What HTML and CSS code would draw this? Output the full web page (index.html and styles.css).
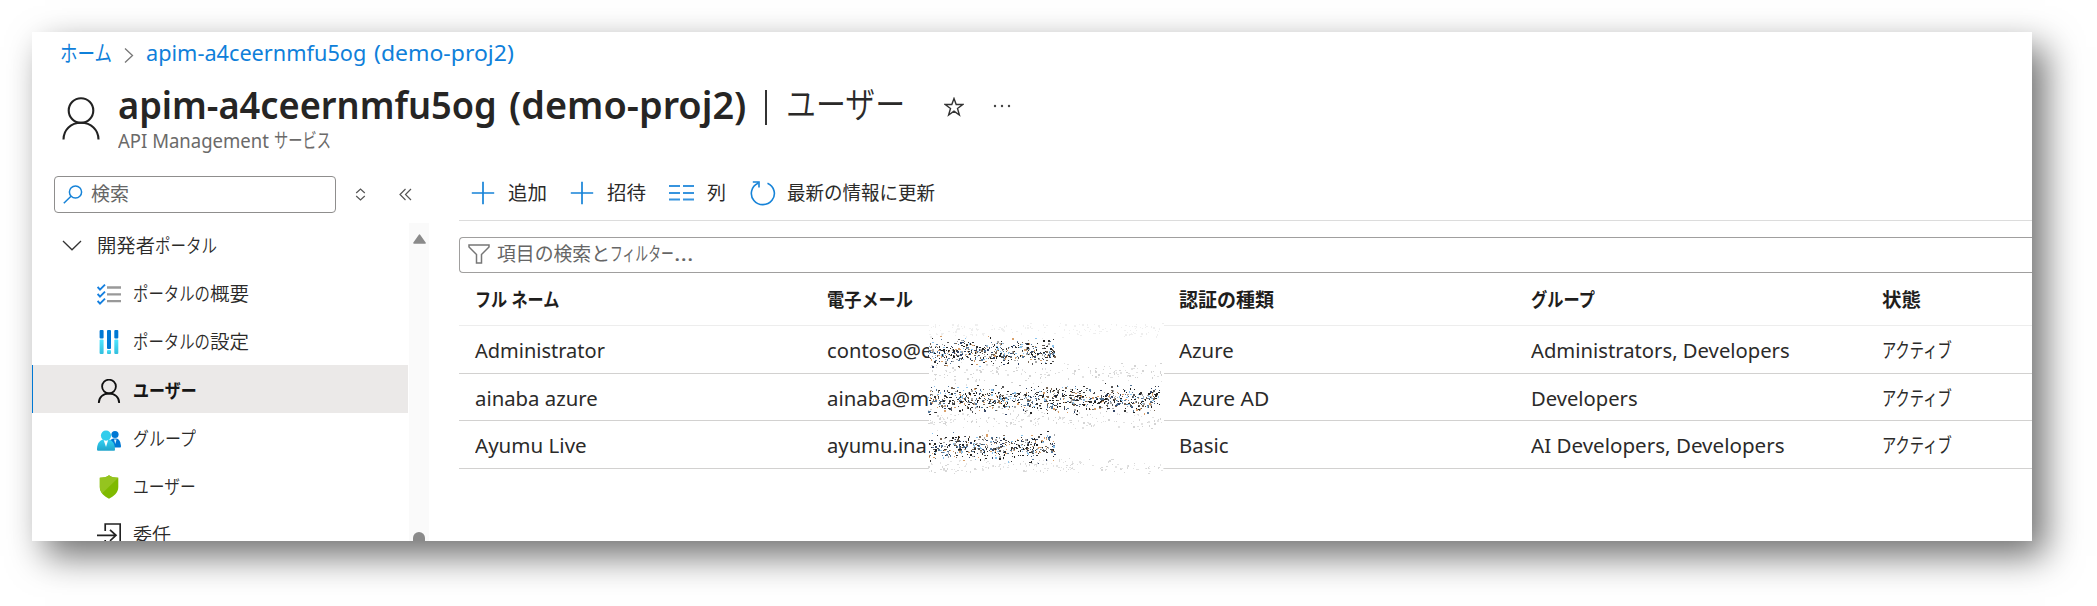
FILE: index.html
```html
<!DOCTYPE html>
<html lang="ja">
<head>
<meta charset="utf-8">
<title>apim-a4ceernmfu5og (demo-proj2) | ユーザー</title>
<link rel="stylesheet" href="styles.css">
</head>
<body>
<svg class="defs" width="0" height="0" aria-hidden="true">
  <defs>
    <linearGradient id="cyan" x1="0" y1="0" x2="0" y2="1"><stop offset="0" stop-color="#32d4f5"/><stop offset="1" stop-color="#22a5cb"/></linearGradient>
    <linearGradient id="aqua" x1="0" y1="0" x2="0" y2="1"><stop offset="0" stop-color="#50e6ff"/><stop offset="1" stop-color="#32bedd"/></linearGradient>
  </defs>
</svg>
<main class="window">
  <nav class="breadcrumb">
    <a class="crumb"><span data-fit="52">ホーム</span></a>
    <svg class="crumb-sep" width="10" height="17" viewBox="0 0 10 17"><path d="M1 1.500 8.500 8.500 1 15.500" fill="none" stroke="#777" stroke-width="1.300"/></svg>
    <a class="crumb"><span data-fit="220">apim-a4ceernmfu5og</span><span class="crumb-group" data-fit="140">(demo-proj2)</span></a>
  </nav>
  <header class="title-area">
    <svg class="title-icon" width="38" height="43" viewBox="0 0 38 43" fill="none" stroke="#222" stroke-width="2.100"><circle cx="19" cy="13.500" r="12.300"/><path d="M1.500 42.500C1.500 32.500 9 25.800 19 25.800S36.500 32.500 36.500 42.500"/></svg>
    <div class="titles">
      <div class="title-line">
        <h1 class="title"><span data-fit="379">apim-a4ceernmfu5og</span><span class="title-group" data-fit="237">(demo-proj2)</span></h1>
        <span class="title-bar"></span>
        <span class="title-page"><span data-fit="119">ユーザー</span></span>
        <svg class="star" width="20" height="20" viewBox="0 0 20 20"><path d="M10 1.500 12.200 7.500H18.800L13.500 11.500 15.400 18 10 14.200 4.600 18 6.500 11.500 1.200 7.500H7.800Z" fill="none" stroke="#333" stroke-width="1.400"/></svg>
        <svg class="dots" width="18" height="4" viewBox="0 0 18 4" fill="#444"><circle cx="2" cy="2" r="1.200"/><circle cx="9" cy="2" r="1.200"/><circle cx="16" cy="2" r="1.200"/></svg>
      </div>
      <div class="subtitle"><span data-fit="151">API Management</span><span class="sub-ja" data-fit="57">サービス</span></div>
    </div>
  </header>
  <div class="body">
    <aside class="sidebar">
      <div class="search-row">
        <div class="search">
          <svg width="20" height="19" viewBox="0 0 20 19" fill="none" stroke="#1683d8" stroke-width="1.500"><circle cx="12.500" cy="7" r="6.100"/><path d="M8 11.300.800 18.300"/></svg>
          <span data-fit="38">検索</span>
        </div>
        <svg class="sort" width="11" height="13" viewBox="0 0 11 13" fill="none" stroke="#555" stroke-width="1.200"><path d="M1.200 5 5.500 1 9.800 5M1.200 8 5.500 12 9.800 8"/></svg>
        <svg class="collapse" width="13" height="13" viewBox="0 0 13 13" fill="none" stroke="#555" stroke-width="1.200"><path d="M6.500 1 1 6.500 6.500 12M12 1 6.500 6.500 12 12"/></svg>
      </div>
      <div class="menu-wrap">
        <div class="menu">
          <div class="group">
            <svg width="20" height="11" viewBox="0 0 20 11"><path d="M1 1 10 9.800 19 1" fill="none" stroke="#333" stroke-width="1.300"/></svg>
            <span class="label"><span data-fit="58">開発者</span><span data-fit="62">ポータル</span></span>
          </div>
          <div class="item">
            <svg width="24" height="24" viewBox="0 0 24 24" fill="none"><path d="M10 5.500H24M10 12.300H24M10 19.100H24" stroke="#999" stroke-width="2.300"/><path d="M.600 5 3 7.700 8 2.700M.600 12 3 14.700 8 9.700M.600 19 3 21.700 8 16.700" stroke="#1580e0" stroke-width="1.900"/></svg>
            <span class="label"><span data-fit="77">ポータルの</span><span data-fit="39">概要</span></span>
          </div>
          <div class="item">
            <svg width="24" height="24" viewBox="0 0 24 24"><g fill="#0078d4"><rect x="2.600" y="0" width="4" height="8.500" rx="1"/><rect x="10" y="0" width="4" height="19" rx="1"/><rect x="17.300" y="0" width="4" height="8.500" rx="1"/></g><g fill="url(#aqua)"><rect x="2.600" y="9.500" width="4" height="14.500" rx="1"/><rect x="10" y="20" width="4" height="4" rx="1"/><rect x="17.300" y="9.500" width="4" height="14.500" rx="1"/></g></svg>
            <span class="label"><span data-fit="77">ポータルの</span><span data-fit="39">設定</span></span>
          </div>
          <div class="item selected">
            <svg width="24" height="24" viewBox="0 0 24 24" fill="none" stroke="#111" stroke-width="1.800"><circle cx="12" cy="7.600" r="6.900"/><path d="M1.800 24C1.800 18.500 6 14.500 12 14.500S22.200 18.500 22.200 24"/></svg>
            <span class="label"><span data-fit="64">ユーザー</span></span>
          </div>
          <div class="item">
            <svg width="24" height="24" viewBox="0 0 24 24"><g fill="#0078d4"><circle cx="18" cy="7.500" r="3.600"/><path d="M12 20.500V16C12 13 14.500 11.500 18 11.500S23.200 13 24 19C24 20 23.600 20.500 23 20.500Z"/></g><path d="M17 12.500H19.500L18.300 17Z" fill="#e6f5ff"/><path d="M0 22.500C0 15.500 3.500 12 9 12S18 15.500 18 22.500C18 23.500 17.500 23.700 17 23.700H1C.400 23.700 0 23.300 0 22.500Z" fill="url(#cyan)"/><path d="M6.300 12H11.500L9 20Z" fill="#fff"/><circle cx="9" cy="8.600" r="5.100" fill="#32cdec"/></svg>
            <span class="label"><span data-fit="63">グループ</span></span>
          </div>
          <div class="item">
            <svg width="24" height="24" viewBox="0 0 24 24"><path d="M12 .300C14.500 2.300 17.500 2.600 21.300 2.700V12C21.300 18 16.500 21.300 12 23.700 7.500 21.300 2.800 18 2.800 12V2.700C6.500 2.600 9.500 2.300 12 .300Z" fill="#7fba00"/><path d="M12 .300C14.500 2.300 17.500 2.600 21.300 2.700L5.300 18.200C3.800 16.500 2.800 14.500 2.800 12V2.700C6.500 2.600 9.500 2.300 12 .300Z" fill="#95c41f"/></svg>
            <span class="label"><span data-fit="63">ユーザー</span></span>
          </div>
          <div class="item">
            <svg width="24" height="24" viewBox="0 0 24 24" fill="none" stroke="#222" stroke-width="1.700"><path d="M8.200 8V1H23.200V23H8.200V17M0 12.300H19M13 6.800 19 12.300 13 17.800"/></svg>
            <span class="label"><span data-fit="38">委任</span></span>
          </div>
        </div>
        <div class="scrollbar">
          <svg width="13" height="10" viewBox="0 0 13 10"><path d="M6.500 1.200 12 9H1Z" fill="#8a8a8a" stroke="#8a8a8a" stroke-width="1.600" stroke-linejoin="round"/></svg>
          <div class="thumb"></div>
        </div>
      </div>
    </aside>
    <section class="content">
      <div class="toolbar">
        <div class="tool add"><svg width="24" height="24" viewBox="0 0 24 24"><path d="M12 .800V23.200M.800 12H23.200" stroke="#1683d8" stroke-width="1.700"/></svg><span data-fit="39">追加</span></div>
        <div class="tool invite"><svg width="24" height="24" viewBox="0 0 24 24"><path d="M12 .800V23.200M.800 12H23.200" stroke="#1683d8" stroke-width="1.700"/></svg><span data-fit="39">招待</span></div>
        <div class="tool columns"><svg width="25" height="24" viewBox="0 0 25 24"><path d="M0 5H11M14 5H25M0 12H11M14 12H25M0 18.600H11M14 18.600H25" stroke="#3794de" stroke-width="2"/></svg><span data-fit="19">列</span></div>
        <div class="tool refresh"><svg width="26" height="25" viewBox="0 0 26 25" fill="none" stroke="#1683d8" stroke-width="1.600"><path d="M17.500 2.200A11.500 11.200 0 1 1 8 2.300M2.800 1H9V6.500"/></svg><span data-fit="148">最新の情報に更新</span></div>
      </div>
      <div class="filter">
        <svg width="22" height="20" viewBox="0 0 22 20"><path d="M1 1H21V3L13.500 10.500V19H8.500V10.500L1 3Z" fill="none" stroke="#777" stroke-width="1.500"/></svg>
        <span class="filter-text"><span data-fit="113">項目の検索と</span><span data-fit="64">フィルター</span><span data-fit="19">...</span></span>
      </div>
      <div class="table">
        <div class="row head">
          <span><span data-fit="84">フル ネーム</span></span><span><span data-fit="86">電子メール</span></span><span><span data-fit="95">認証の種類</span></span><span><span data-fit="64">グループ</span></span><span><span data-fit="39">状態</span></span>
        </div>
        <div class="row first">
          <span><span data-fit="130">Administrator</span></span><span><span data-fit="105">contoso@e</span></span><span><span data-fit="55">Azure</span></span><span><span data-fit="259">Administrators, Developers</span></span><span class="ja"><span data-fit="70">アクティブ</span></span>
        </div>
        <div class="row">
          <span><span data-fit="123">ainaba azure</span></span><span><span data-fit="102">ainaba@m</span></span><span><span data-fit="90">Azure AD</span></span><span><span data-fit="107">Developers</span></span><span class="ja"><span data-fit="70">アクティブ</span></span>
        </div>
        <div class="row">
          <span><span data-fit="112">Ayumu Live</span></span><span><span data-fit="100">ayumu.ina</span></span><span><span data-fit="50">Basic</span></span><span><span data-fit="254">AI Developers, Developers</span></span><span class="ja"><span data-fit="70">アクティブ</span></span>
        </div>
        <canvas class="redaction" width="236" height="152"></canvas>
      </div>
    </section>
  </div>
</main>
<script src="app.js"></script>
</body>
</html>
```

FILE: styles.css
```css
* { box-sizing: border-box; }

body {
  margin: 0;
  width: 2097px;
  height: 606px;
  padding: 32px;
  overflow: hidden;
  background: #fff;
  color: #2b2a29;
  font-family: "Noto Sans", "Noto Sans CJK JP", sans-serif;
  font-size: 20px;
  line-height: 28px;
}

svg { display: block; flex: none; }
.defs { position: absolute; }

[data-fit] {
  display: inline-block;
  white-space: nowrap;
  transform-origin: 0 50%;
}

.window {
  display: flex;
  flex-direction: column;
  width: 2000px;
  height: 509px;
  overflow: hidden;
  background: #fff;
  box-shadow: 13px 15px 34px rgba(0, 0, 0, .57);
}

.breadcrumb {
  display: flex;
  align-items: center;
  height: 42px;
  margin-bottom: 2px;
  padding: 0 0 0 28px;
  color: #0f80da;
  font-size: 21.500px;
}
.crumb { white-space: nowrap; }
.crumb-group { margin-left: 8px; }
.crumb-sep { margin: 4px 12px 0 12px; }

.title-area {
  display: flex;
  height: 94px;
  padding-left: 30px;
}
.title-icon { margin: 21px 18px 0 0; }
.title-line {
  display: flex;
  align-items: center;
  height: 56px;
}
.title {
  margin: 0;
  font-size: 38.500px;
  font-weight: 600;
  color: #262524;
  white-space: nowrap;
}
.title-group { margin-left: 12px; }
.title-bar {
  width: 2px;
  height: 35px;
  margin: 6px 19px 0 19px;
  background: #333;
}
.title-page {
  margin-top: 2px;
  font-size: 36px;
  font-weight: 350;
}
.star { margin: 5px 29px 0 39px; }
.dots { margin-top: 3px; }
.subtitle {
  height: 28px;
  margin-top: -5px;
  color: #6b6a69;
}
.sub-ja { margin-left: 5px; }

.body {
  display: flex;
  flex: 1;
  min-height: 0;
}
.sidebar {
  display: flex;
  flex-direction: column;
  width: 397px;
  margin-right: 30px;
}
.search-row {
  display: flex;
  align-items: center;
  height: 49px;
  padding-left: 22px;
}
.search {
  display: flex;
  align-items: center;
  gap: 8px;
  width: 282px;
  height: 37px;
  padding: 0 0 1px 8px;
  border: 1px solid #8f8e8d;
  border-radius: 4px;
  color: #666;
  font-size: 19px;
}
.sort { margin: 0 33px 0 19px; }

.menu-wrap {
  display: flex;
  flex: 1;
  min-height: 0;
  margin-top: 1px;
}
.menu {
  width: 376px;
  overflow: hidden;
  font-size: 19px;
  font-weight: 350;
}
.group, .item {
  display: flex;
  align-items: center;
  height: 48.300px;
  padding-top: 3px;
}
.group { gap: 15px; padding-left: 30px; }
.item { gap: 12px; padding-left: 65px; }
.label { white-space: nowrap; }
.selected {
  padding-left: 64px;
  border-left: 1px solid #0078d4;
  background: #ebe9e8;
  color: #151515;
  font-weight: 700;
}
.scrollbar {
  display: flex;
  flex-direction: column;
  justify-content: space-between;
  align-items: center;
  width: 20px;
  margin: 3px 0 0 1px;
  padding-top: 11px;
  background: #fafafa;
}
.thumb {
  width: 12px;
  height: 9px;
  border-radius: 6px 6px 0 0;
  background: #8a8a8a;
}

.content {
  display: flex;
  flex: 1;
  flex-direction: column;
  min-width: 0;
}
.toolbar {
  display: flex;
  align-items: center;
  height: 51px;
  margin-bottom: 16px;
  padding: 0 0 4px 12px;
  border-bottom: 1px solid #dcdcdc;
  font-size: 19px;
}
.tool { display: flex; align-items: center; gap: 13px; }
.add { width: 99px; }
.invite { width: 99px; }
.columns { width: 81px; }
.refresh { gap: 11px; }

.filter {
  display: flex;
  align-items: center;
  gap: 7px;
  height: 36px;
  padding: 0 0 2px 8px;
  border: 1px solid #a09f9e;
  border-right: 0;
  border-radius: 4px 0 0 4px;
  color: #666;
  font-size: 19px;
}
.filter-text { white-space: nowrap; }

.table { position: relative; }
.row {
  display: grid;
  grid-template-columns: 352px 352px 352px 351px 1fr;
  align-items: center;
  height: 47.500px;
  padding: 4px 0 0 16px;
  border-bottom: 1px solid #d2d1d0;
}
.row > span { white-space: nowrap; }
.head {
  height: 53px;
  padding-top: 2px;
  border-bottom-color: #ededed;
  font-size: 19px;
  font-weight: 700;
  color: #1f1e1d;
}
.redaction {
  position: absolute;
  left: 469px;
  top: 49px;
}
```

FILE: app.js
```js
function fitLabels() {
  document.querySelectorAll("[data-fit]").forEach(function (el) {
    var natural = el.offsetWidth;
    var target = Number(el.dataset.fit);
    el.style.transform = "scaleX(" + target / natural + ")";
    el.style.marginRight = target - natural + "px";
  });
}

// Scatter specks over the hidden part of the e-mail addresses.
function drawRedaction() {
  var ctx = document.querySelector(".redaction").getContext("2d");
  var seed = 7;
  function rnd() {
    seed = (seed * 16807) % 2147483647;
    return seed / 2147483647;
  }
  ctx.fillStyle = "#fff";
  ctx.fillRect(1, 0, 235, 152);
  function specks(x0, x1, yc, spread, count, colors) {
    for (var i = 0; i < count; i++) {
      var y = yc + (rnd() + rnd() + rnd() - 1.5) * spread;
      ctx.fillStyle = colors[Math.floor(rnd() * colors.length)];
      ctx.fillRect(Math.round(x0 + rnd() * (x1 - x0)), Math.round(y), rnd() < 0.4 ? 2 : 1, rnd() < 0.3 ? 2 : 1);
    }
  }
  var dark = ["#222", "#222", "#333", "#555", "#765", "#579", "#8bc4ee", "#d9a06a", "#346", "#aaa"];
  specks(0, 235, 7, 7, 170, ["#eee", "#f0f0f0"]);
  specks(0, 235, 50, 9, 170, ["#e2e2e2", "#d4d4d4"]);
  specks(0, 235, 97, 9, 190, ["#e2e2e2", "#d4d4d4"]);
  specks(0, 235, 144, 7, 180, ["#e4e4e4", "#d8d8d8"]);
  specks(0, 126, 30, 12, 520, dark);
  specks(0, 232, 77, 12, 900, dark);
  specks(0, 126, 125, 12, 470, dark);
}

fitLabels();
drawRedaction();
```
